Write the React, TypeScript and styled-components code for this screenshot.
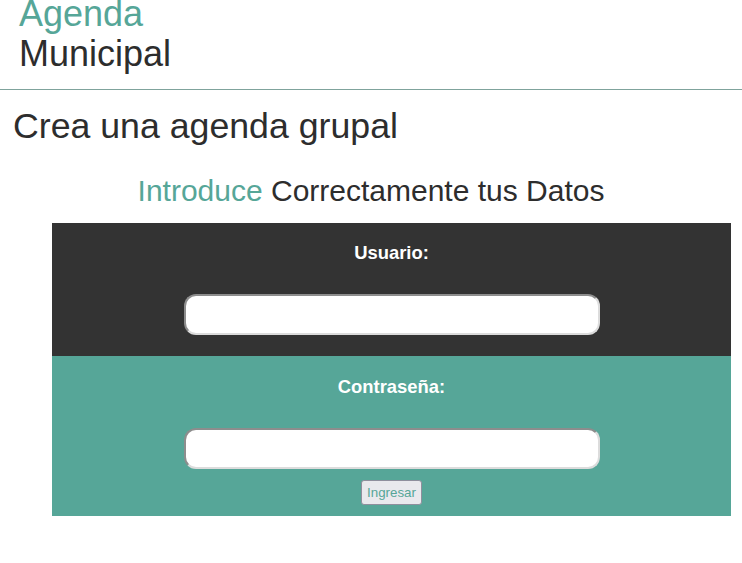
import React from "react";
import styled, { createGlobalStyle } from "styled-components";

const Global = createGlobalStyle`
  html, body { margin: 0; padding: 0; background: #ffffff; }
  body { font-family: "Liberation Sans", Arial, sans-serif; color: #333333; }
`;

const TEAL = "#56a698";
const DARK = "#333333";

const Header = styled.header`
  padding: 0 0 15px 19px;
  border-bottom: 1px solid #7fa39c;
`;

const Brand = styled.h1`
  margin: -6px 0 0 0;
  font-size: 36px;
  line-height: 40px;
  font-weight: normal;
`;

const BrandLine = styled.span<{ $accent?: boolean }>`
  display: block;
  color: ${(p) => (p.$accent ? TEAL : "#2d2d2d")};
`;

const Title = styled.h2`
  margin: 16px 0 0 13px;
  font-size: 35.7px;
  font-weight: normal;
  color: #2d2d2d;
  line-height: normal;
`;

const Subtitle = styled.h3`
  margin: 27px 0 0 0;
  text-align: center;
  font-size: 30px;
  font-weight: normal;
  color: #2d2d2d;
  line-height: normal;
`;

const Accent = styled.span`
  color: ${TEAL};
`;

const Form = styled.form`
  margin: 15px 0 0 52px;
  width: 679px;
  display: flex;
  flex-direction: column;
`;

const Section = styled.div<{ $bg: string; $top: number; $bottom: number }>`
  background: ${(p) => p.$bg};
  display: flex;
  flex-direction: column;
  align-items: center;
  padding: ${(p) => p.$top}px 0 ${(p) => p.$bottom}px;
`;

const Label = styled.label`
  color: #ffffff;
  font-weight: bold;
  font-size: 18.4px;
  line-height: normal;
`;

const Field = styled.input`
  margin-top: 30px;
  box-sizing: border-box;
  width: 416px;
  height: 41px;
  border-width: 2px;
  border-style: solid;
  border-color: #8d8d8d #dcdcdc #dcdcdc #8d8d8d;
  border-radius: 12px;
  background: #ffffff;
  outline: none;
`;

const Submit = styled.button`
  margin-top: 11px;
  font-family: "Liberation Sans", Arial, sans-serif;
  font-size: 13.333px;
  color: ${TEAL};
  background: #e9e9ed;
  border: 1px solid #8f8f9d;
  border-radius: 3px;
  padding: 4px 5px;
  line-height: normal;
`;

export default function App() {
  return (
    <>
      <Global />
      <Header>
        <Brand>
          <BrandLine $accent>Agenda</BrandLine>
          <BrandLine>Municipal</BrandLine>
        </Brand>
      </Header>
      <Title>Crea una agenda grupal</Title>
      <Subtitle>
        <Accent>Introduce</Accent> Correctamente tus Datos
      </Subtitle>
      <Form onSubmit={(e) => e.preventDefault()}>
        <Section $bg={DARK} $top={19} $bottom={21}>
          <Label htmlFor="usuario">Usuario:</Label>
          <Field id="usuario" type="text" />
        </Section>
        <Section $bg={TEAL} $top={20} $bottom={11}>
          <Label htmlFor="clave">Contraseña:</Label>
          <Field id="clave" type="password" />
          <Submit type="submit">Ingresar</Submit>
        </Section>
      </Form>
    </>
  );
}
